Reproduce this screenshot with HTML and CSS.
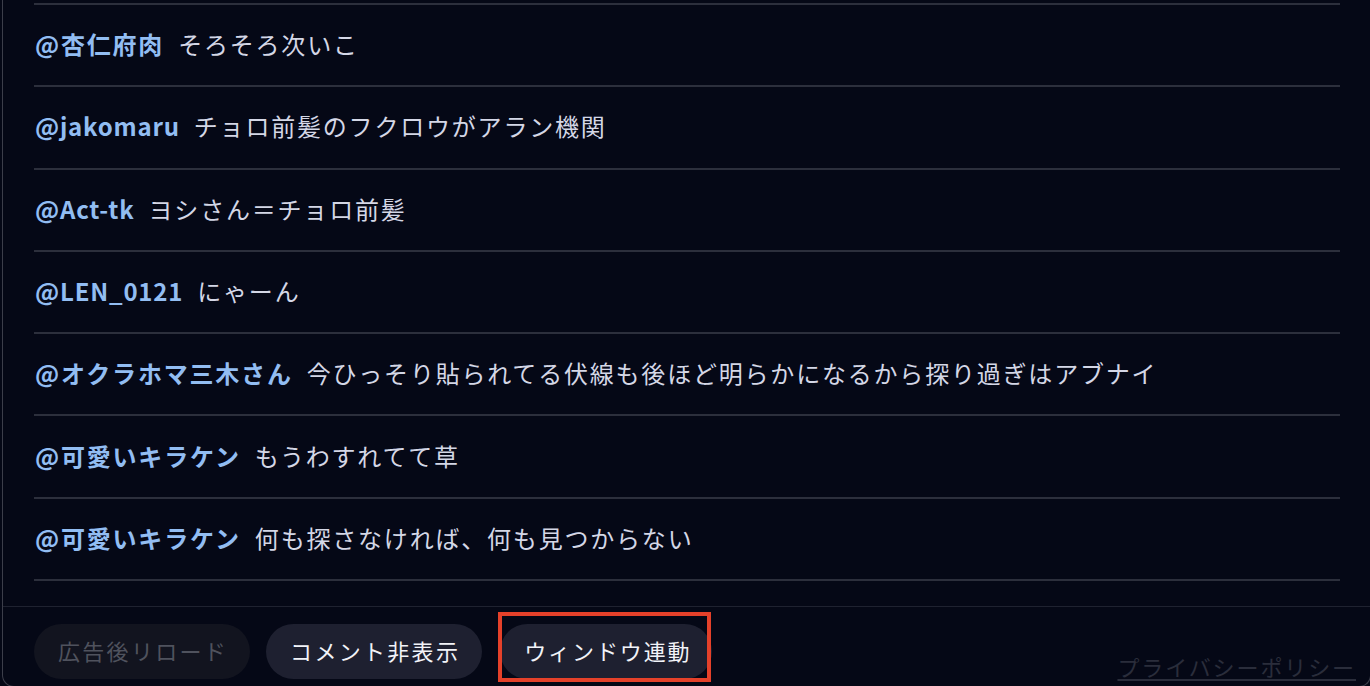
FILE: index.html
```html
<!DOCTYPE html>
<html lang="ja">
<head>
<meta charset="utf-8">
<title>コメント</title>
<link rel="stylesheet" href="styles.css">
</head>
<body>
<div class="panel">
  <ul class="comments">
    <li class="row"><span class="user">@杏仁府肉</span><span class="text">そろそろ次いこ</span></li>
    <li class="row"><span class="user latin">@jakomaru</span><span class="text">チョロ前髪のフクロウがアラン機関</span></li>
    <li class="row"><span class="user latin">@Act-tk</span><span class="text">ヨシさん＝チョロ前髪</span></li>
    <li class="row"><span class="user latin">@LEN_0121</span><span class="text">にゃーん</span></li>
    <li class="row"><span class="user">@オクラホマ三木さん</span><span class="text">今ひっそり貼られてる伏線も後ほど明らかになるから探り過ぎはアブナイ</span></li>
    <li class="row"><span class="user">@可愛いキラケン</span><span class="text">もうわすれてて草</span></li>
    <li class="row"><span class="user">@可愛いキラケン</span><span class="text">何も探さなければ、何も見つからない</span></li>
  </ul>
  <div class="footer">
    <button class="btn btn-disabled" disabled>広告後リロード</button>
    <button class="btn">コメント非表示</button>
    <div class="highlight-wrap">
      <button class="btn btn-window">ウィンドウ連動</button>
      <span class="highlight"></span>
    </div>
    <a class="privacy" href="#">プライバシーポリシー</a>
  </div>
</div>
</body>
</html>
```

FILE: styles.css
```css
html, body {
  margin: 0;
  padding: 0;
  background: #050816;
  width: 1370px;
  height: 686px;
  overflow: hidden;
  font-family: "Noto Sans CJK JP", "Noto Sans", sans-serif;
}

.panel {
  box-sizing: border-box;
  margin-left: 2px;
  width: 1369px;
  height: 687px;
  border: 1px solid #3c3e4a;
  border-top: none;
  border-radius: 0 0 12px 12px;
  background: #050816;
  display: flex;
  flex-direction: column;
}

.comments {
  list-style: none;
  margin: 3px 30px 0 31px;
  padding: 0;
  border-bottom: 2px solid #2c2f3c;
}

.row {
  box-sizing: border-box;
  height: 82.3px;
  border-top: 2px solid #2c2f3c;
  display: flex;
  align-items: center;
  padding: 0 0 3px 1px;
  font-size: 24px;
  letter-spacing: 1.8px;
  white-space: nowrap;
}

.user {
  color: #92bdf2;
  font-weight: 700;
  margin-right: 14px;
}

.user.latin {
  letter-spacing: 0.8px;
  margin-right: 14px;
}

.text {
  color: #d4d7e6;
  font-weight: 400;
}

.footer {
  margin-top: 25px;
  border-top: 1px solid #1f2230;
  padding: 17px 14px 0 31px;
  display: flex;
  align-items: flex-start;
  gap: 16px;
  flex: 1;
}

.btn {
  height: 55px;
  padding: 0 22px 3px 24px;
  border: none;
  border-radius: 28px;
  background: #1e2030;
  color: #f2f3f8;
  font-family: "Noto Sans CJK JP", "Noto Sans", sans-serif;
  font-size: 22px;
  letter-spacing: 2.3px;
  white-space: nowrap;
}

.btn-disabled {
  background: #12141f;
  color: #4f525d;
}

.highlight-wrap {
  position: relative;
  margin-left: 2px;
}

.btn-window {
  padding: 0 20px 3px 24px;
  letter-spacing: 1.9px;
}

.highlight {
  position: absolute;
  left: -2px;
  top: -12px;
  width: 213px;
  height: 70px;
  box-sizing: border-box;
  border: 4px solid #e5412a;
  pointer-events: none;
}

.privacy {
  margin-left: auto;
  align-self: flex-end;
  margin-bottom: 6px;
  color: #2a2d3b;
  font-size: 22px;
  letter-spacing: 1.9px;
  line-height: 28px;
  text-decoration: underline;
  text-decoration-thickness: 2px;
  text-underline-offset: 3px;
  white-space: nowrap;
}
```
